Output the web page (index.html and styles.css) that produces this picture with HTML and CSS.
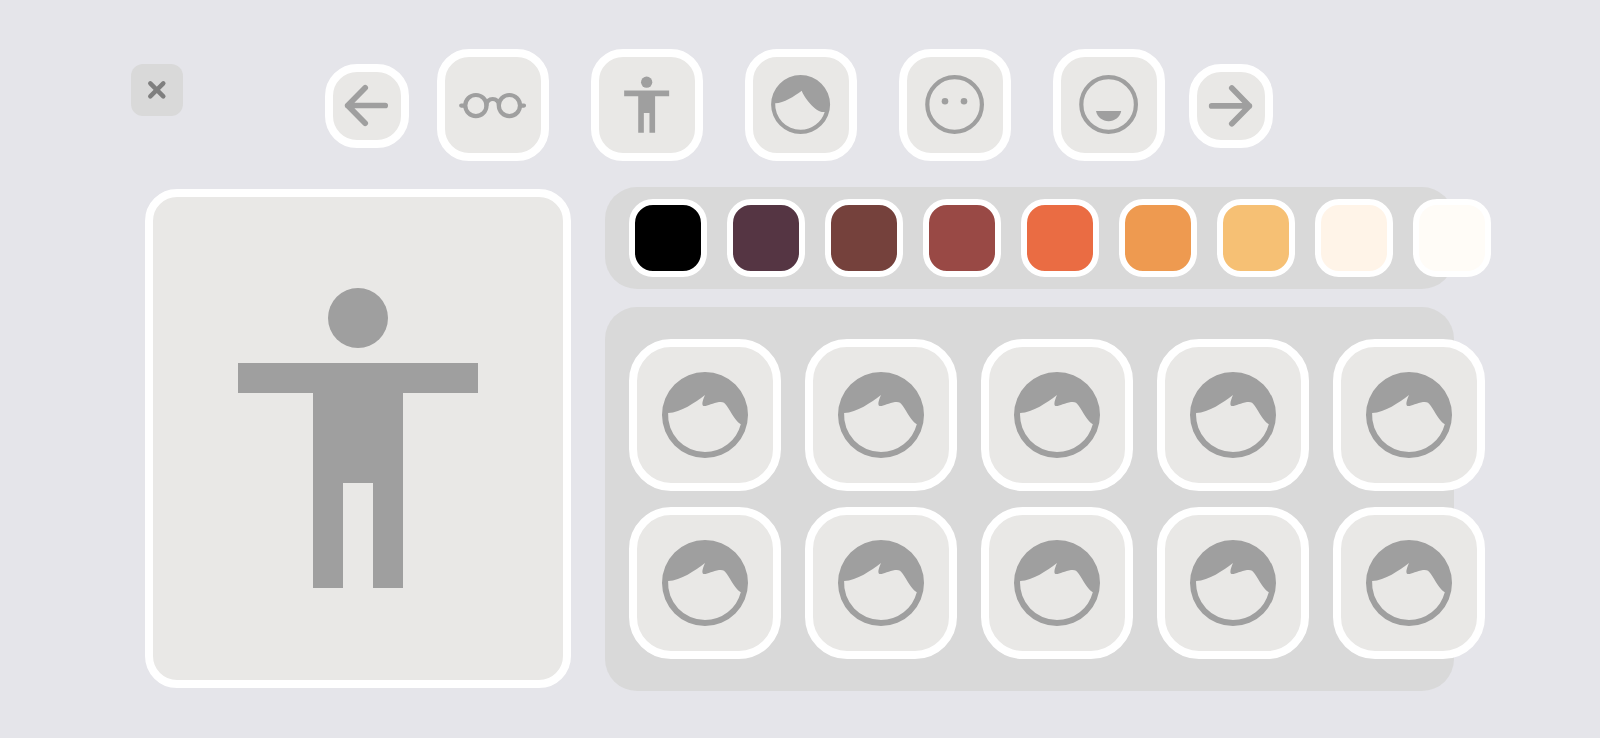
FILE: index.html
```html
<!DOCTYPE html>
<html lang="en">
<head>
<meta charset="utf-8">
<meta name="viewport" content="width=device-width, initial-scale=1">
<title>Avatar editor</title>
<link rel="stylesheet" href="styles.css">
</head>
<body>
<svg class="sprite" aria-hidden="true">
  <symbol id="person" viewBox="0 0 24 24">
    <circle cx="12" cy="4" r="2"/>
    <path d="M4 7H20V9H15V22H13V15H11V22H9V9H4Z"/>
  </symbol>
  <symbol id="hair" viewBox="0 0 136 136">
    <path fill-rule="evenodd" d="M68 25A43 43 0 0 1 68 111A43 43 0 0 1 68 25ZM31.1 66C44 65.5 58 55.5 68 48C66.3 52 64.6 56.5 65.8 58.4C67.5 60.8 75 56 82 55C86 54.5 87.5 55.5 89.5 58.5C94 65 99 75 103.8 77.3A37 37 0 0 1 68 105A37 37 0 0 1 31.1 66Z"/>
  </symbol>
</svg>

<header class="header">
  <button class="close" type="button" aria-label="Close">
    <svg class="close-icon" viewBox="0 0 20 20"><path d="M3.3 3.3L16.3 16.3M16.3 3.3L3.3 16.3"/></svg>
  </button>
  <nav class="categories" aria-label="Categories">
    <button class="arrow" type="button" aria-label="Previous">
      <svg class="arrow-icon" viewBox="0 0 48 48"><path d="M42.2 23.5H4.7M22.2 5.7L4.7 23.5L22.2 41.3"/></svg>
    </button>
    <div class="category-list">
      <button class="category" type="button" aria-label="Glasses">
        <svg class="icon" viewBox="0 0 96 96">
          <g class="line">
            <circle cx="30.9" cy="48.6" r="10.6"/>
            <circle cx="64.4" cy="48.6" r="10.6"/>
            <path d="M41.4 48.3A6.3 6.3 0 0 1 54 48.3M16.2 48.6H20M79 48.6H75"/>
          </g>
        </svg>
      </button>
      <button class="category" type="button" aria-label="Body">
        <svg class="icon" viewBox="0 0 96 96"><use href="#person" x="13.9" y="13.9" width="67.5" height="67.5"/></svg>
      </button>
      <button class="category" type="button" aria-label="Hair">
        <svg class="icon" viewBox="0 0 96 96">
          <path fill-rule="evenodd" d="M47.6 18A29.5 29.5 0 0 1 47.6 77A29.5 29.5 0 0 1 47.6 18ZM22.2 46.3C31 46 41 39.5 48.7 33.7C51 40 63 56.5 71.7 55A25.3 25.3 0 0 1 47.6 72.8A25.3 25.3 0 0 1 22.2 46.3Z"/>
        </svg>
      </button>
      <button class="category" type="button" aria-label="Eyes">
        <svg class="icon" viewBox="0 0 96 96">
          <circle class="line" cx="47.6" cy="47.5" r="27.3"/>
          <circle cx="38" cy="44.3" r="3.3"/>
          <circle cx="57" cy="44.3" r="3.3"/>
        </svg>
      </button>
      <button class="category" type="button" aria-label="Mouth">
        <svg class="icon" viewBox="0 0 96 96">
          <circle class="line" cx="47.6" cy="47.5" r="27.3"/>
          <path d="M35 54H60.2C59 60 53.5 64.3 47.6 64.3S36.2 60 35 54Z"/>
        </svg>
      </button>
    </div>
    <button class="arrow" type="button" aria-label="Next">
      <svg class="arrow-icon" viewBox="0 0 48 48"><path d="M4.7 23.9H42.3M24.8 6.1L42.3 23.9L24.8 41.7"/></svg>
    </button>
  </nav>
</header>

<main class="editor">
  <section class="preview" aria-label="Preview">
    <svg class="figure" viewBox="0 0 24 24"><use href="#person"/></svg>
  </section>
  <div class="options">
    <section class="panel colors" aria-label="Hair colour">
      <button class="swatch black" type="button" aria-label="Black"></button>
      <button class="swatch plum" type="button" aria-label="Plum"></button>
      <button class="swatch brown" type="button" aria-label="Brown"></button>
      <button class="swatch auburn" type="button" aria-label="Auburn"></button>
      <button class="swatch red" type="button" aria-label="Red"></button>
      <button class="swatch copper" type="button" aria-label="Copper"></button>
      <button class="swatch blond" type="button" aria-label="Blond"></button>
      <button class="swatch cream" type="button" aria-label="Cream"></button>
      <button class="swatch ivory" type="button" aria-label="Ivory"></button>
    </section>
    <section class="panel styles" aria-label="Hair style">
      <button class="style" type="button" aria-label="Style 1"><svg class="icon"><use href="#hair"/></svg></button>
      <button class="style" type="button" aria-label="Style 2"><svg class="icon"><use href="#hair"/></svg></button>
      <button class="style" type="button" aria-label="Style 3"><svg class="icon"><use href="#hair"/></svg></button>
      <button class="style" type="button" aria-label="Style 4"><svg class="icon"><use href="#hair"/></svg></button>
      <button class="style" type="button" aria-label="Style 5"><svg class="icon"><use href="#hair"/></svg></button>
      <button class="style" type="button" aria-label="Style 6"><svg class="icon"><use href="#hair"/></svg></button>
      <button class="style" type="button" aria-label="Style 7"><svg class="icon"><use href="#hair"/></svg></button>
      <button class="style" type="button" aria-label="Style 8"><svg class="icon"><use href="#hair"/></svg></button>
      <button class="style" type="button" aria-label="Style 9"><svg class="icon"><use href="#hair"/></svg></button>
      <button class="style" type="button" aria-label="Style 10"><svg class="icon"><use href="#hair"/></svg></button>
    </section>
  </div>
</main>
</body>
</html>
```
FILE: styles.css
```css
* {
  box-sizing: border-box;
}

body {
  margin: 0;
  background: #e5e5ea;
  font-family: "Liberation Sans", sans-serif;
}

button {
  flex: none;
  display: flex;
  align-items: center;
  justify-content: center;
  margin: 0;
  padding: 0;
  border: 0;
  cursor: pointer;
}

.sprite {
  display: none;
}

.header {
  display: grid;
  grid-template-columns: 1fr auto 1fr;
  padding: 49px 133px 26px 131px;
}

.close {
  width: 52px;
  height: 52px;
  margin-top: 15px;
  border-radius: 12px;
  background: #d9d9d9;
}

.close-icon {
  width: 20px;
  height: 20px;
  fill: none;
  stroke: #7f7f7f;
  stroke-width: 4.5;
  stroke-linecap: round;
}

.categories {
  display: flex;
}

.category-list {
  display: flex;
  gap: 42px;
  margin: 0 24px 0 28px;
}

.arrow,
.category,
.style,
.preview {
  border: 8px solid #fff;
  background: #e9e8e6;
}

.arrow {
  width: 84px;
  height: 84px;
  margin-top: 15px;
  border-radius: 32px;
}

.arrow-icon {
  width: 48px;
  height: 48px;
  fill: none;
  stroke: #9f9f9f;
  stroke-width: 5.7;
  stroke-linecap: round;
  stroke-linejoin: round;
}

.category {
  width: 112px;
  height: 112px;
  border-radius: 32px;
}

.icon {
  width: 100%;
  height: 100%;
  fill: #9f9f9f;
}

.line {
  fill: none;
  stroke: #9f9f9f;
  stroke-width: 4.2;
  stroke-linecap: round;
}

.editor {
  display: grid;
  grid-template-columns: minmax(0, 426fr) minmax(0, 849fr);
  gap: 34px;
  padding: 0 146px 47px 145px;
}

.preview {
  display: flex;
  align-items: center;
  justify-content: center;
  margin: 2px 0 3px;
  padding-bottom: 1px;
  border-radius: 32px;
}

.figure {
  width: 360px;
  height: 360px;
  fill: #9f9f9f;
}

.options {
  display: flex;
  flex-direction: column;
  gap: 18px;
}

.panel {
  border-radius: 32px;
  background: #d9d9d9;
}

.colors {
  display: flex;
  gap: 20px;
  padding: 12px 24px;
}

.swatch {
  width: 78px;
  height: 78px;
  border: 6px solid #fff;
  border-radius: 24px;
}

.black { background: #000; }
.plum { background: #553543; }
.brown { background: #75413c; }
.auburn { background: #994945; }
.red { background: #ea6c43; }
.copper { background: #ee9a50; }
.blond { background: #f6c074; }
.cream { background: #fff4e8; }
.ivory { background: #fffcf7; }

.styles {
  display: grid;
  grid-template-columns: repeat(5, 152px);
  gap: 16px 24px;
  padding: 32px 24px;
}

.style {
  width: 152px;
  height: 152px;
  border-radius: 42px;
}
```
